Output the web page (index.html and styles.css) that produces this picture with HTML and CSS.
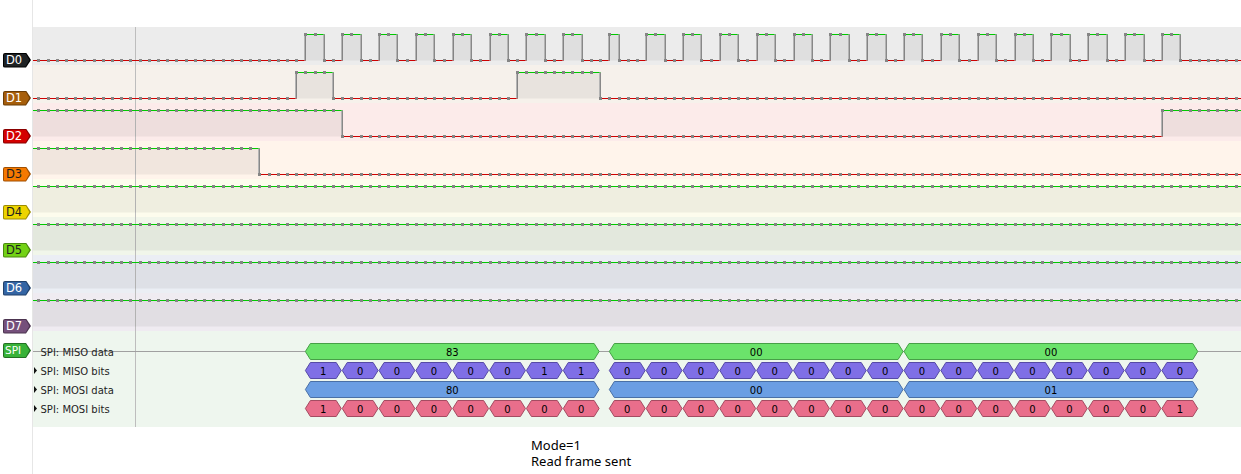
FILE: index.html
```html
<!DOCTYPE html>
<html lang="en">
<head>
    <meta charset="UTF-8">
    <meta name="viewport" content="width=device-width, initial-scale=1.0">
    <title>SPI capture</title>
    <link rel="stylesheet" href="styles.css">
</head>
<body>
    <div class="view">
        <div class="label-cell"></div>
        <div class="track-head"></div>

        <div class="label-cell"><span class="tag tag-d0"><span>D0</span></span></div>
        <div class="track band-d0" data-ch="0"></div>

        <div class="label-cell"><span class="tag tag-d1"><span>D1</span></span></div>
        <div class="track band-d1" data-ch="1"></div>

        <div class="label-cell"><span class="tag tag-d2"><span>D2</span></span></div>
        <div class="track band-d2" data-ch="2"></div>

        <div class="label-cell"><span class="tag tag-d3"><span>D3</span></span></div>
        <div class="track band-d3" data-ch="3"></div>

        <div class="label-cell"><span class="tag tag-d4"><span>D4</span></span></div>
        <div class="track band-d4" data-ch="4"></div>

        <div class="label-cell"><span class="tag tag-d5"><span>D5</span></span></div>
        <div class="track band-d5" data-ch="5"></div>

        <div class="label-cell"><span class="tag tag-d6"><span>D6</span></span></div>
        <div class="track band-d6" data-ch="6"></div>

        <div class="label-cell"><span class="tag tag-d7"><span>D7</span></span></div>
        <div class="track band-d7" data-ch="7"></div>

        <div class="label-cell"><span class="tag tag-spi"><span>SPI</span></span></div>
        <div class="track band-spi" id="spiTrack"></div>

        <div class="label-cell"></div>
        <div class="footer">
            <div>Mode=1</div>
            <div>Read frame sent</div>
        </div>
    </div>

    <script src="script.js"></script>
</body>
</html>
```

FILE: styles.css
```css
body {
    margin: 0;
    background-color: #fff;
    font-family: "DejaVu Sans", sans-serif;
}
.view {
    display: grid;
    grid-template-columns: 33px 1208px;
    grid-template-rows: 27px repeat(8, 38px) 96px 47px;
    width: 1241px;
    height: 474px;
    overflow: hidden;
}
.label-cell {
    border-right: 1px solid #e6e6e6;
}
.track svg {
    display: block;
}
.band-d0 { background-color: #ececec; }
.band-d1 { background-color: #f6f1eb; }
.band-d2 { background-color: #fcebea; }
.band-d3 { background-color: #fff4eb; }
.band-d4 { background-color: #fdfced; }
.band-d5 { background-color: #f1f6ea; }
.band-d6 { background-color: #ebeef4; }
.band-d7 { background-color: #efebf1; }
.band-spi { background-color: #eef6ee; }

.tag {
    display: block;
    width: 28px;
    height: 15px;
    margin: 25.5px 0 0 3px;
    padding: 1px;
    box-sizing: border-box;
    border-radius: 2px 0 0 2px;
    clip-path: polygon(0 0, 23px 0, 28px 7.5px, 23px 15px, 0 15px);
}
.tag span {
    display: block;
    height: 13px;
    padding-left: 2px;
    border-radius: 1px 0 0 1px;
    clip-path: polygon(0 0, 21.6px 0, 25.3px 6.5px, 21.6px 13px, 0 13px);
    font-size: 11.5px;
    line-height: 13px;
    color: #fff;
}
.tag-d0 { background-color: #000; }
.tag-d0 span { background-color: #1e2224; }
.tag-d1 { background-color: #6b3c05; }
.tag-d1 span { background-color: #a65e0b; }
.tag-d2 { background-color: #8a0000; }
.tag-d2 span { background-color: #d40000; }
.tag-d3 { background-color: #a04f00; }
.tag-d3 span { background-color: #f57900; color: #1e1e1e; }
.tag-d4 { background-color: #9c8c00; }
.tag-d4 span { background-color: #edd400; color: #1e1e1e; }
.tag-d5 { background-color: #4a890e; }
.tag-d5 span { background-color: #73d216; color: #1e1e1e; }
.tag-d6 { background-color: #21416a; }
.tag-d6 span { background-color: #3465a4; }
.tag-d7 { background-color: #4c3450; }
.tag-d7 span { background-color: #75507b; }
.tag-spi {
    margin-top: 12px;
    background-color: #237023;
}
.tag-spi span {
    background-color: #38b238;
    padding-left: 1px;
    font-size: 10.5px;
}

.dec-title {
    font-family: "DejaVu Sans", sans-serif;
    font-size: 10px;
    fill: #1e1e1e;
}
.ann-text {
    font-family: "DejaVu Sans", sans-serif;
    font-size: 10px;
    text-anchor: middle;
    fill: #000;
}
.footer {
    padding: 10px 0 0 498px;
    font-family: "Noto Sans", sans-serif;
    font-size: 13px;
    line-height: 16px;
    color: #000;
}
```

FILE: script.js
```javascript
const NS = 'http://www.w3.org/2000/svg';
const PITCH = 9.21;
const ORIGIN = 5.3;
const HIGH_Y = 7.5;
const LOW_Y = 33.5;
const CURSOR_X = 102.5;

function el(tag, attrs, parent) {
    const node = document.createElementNS(NS, tag);
    for (const key in attrs) node.setAttribute(key, attrs[key]);
    parent.appendChild(node);
    return node;
}

function sampleX(i) {
    return Math.round(ORIGIN + PITCH * i) + 0.5;
}

// SCK: 3 bytes, 8 pulses each
function clockEdges() {
    const edges = [];
    for (let k = 0; k < 8; k++) edges.push(29 + 4 * k, 31 + 4 * k);
    edges.push(62, 63);
    for (let k = 1; k < 8; k++) edges.push(62 + 4 * k, 64 + 4 * k);
    for (let k = 0; k < 8; k++) edges.push(94 + 4 * k, 96 + 4 * k);
    return edges;
}

const channels = [
    { init: 0, edges: clockEdges() },
    { init: 0, edges: [28, 32, 52, 61] },
    { init: 1, edges: [33, 122] },
    { init: 1, edges: [24] },
    { init: 1, edges: [] },
    { init: 1, edges: [] },
    { init: 1, edges: [] },
    { init: 1, edges: [] }
];

function drawChannel(track, ch) {
    const w = track.clientWidth;
    const h = track.clientHeight;
    const svg = el('svg', { width: w, height: h }, track);
    el('line', { x1: CURSOR_X, y1: 0, x2: CURSOR_X, y2: h, stroke: '#bdbdbd' }, svg);

    let level = ch.init;
    let from = 0;
    const stops = ch.edges.map(sampleX).concat([w]);
    stops.forEach((x, n) => {
        const y = level ? HIGH_Y : LOW_Y;
        if (level) {
            el('rect', { x: from, y: HIGH_Y, width: x - from, height: LOW_Y - HIGH_Y, fill: 'rgba(0,0,0,0.055)' }, svg);
        }
        el('line', { x1: from, y1: y, x2: x, y2: y, stroke: level ? '#00c800' : '#cc0000' }, svg);
        if (n < ch.edges.length) {
            el('line', { x1: x - 1, y1: HIGH_Y, x2: x - 1, y2: LOW_Y, stroke: '#b4b4b4' }, svg);
            el('line', { x1: x, y1: HIGH_Y, x2: x, y2: LOW_Y, stroke: '#888' }, svg);
        }
        level = 1 - level;
        from = x;
    });

    for (let i = 0; sampleX(i) < w + 2; i++) {
        const flips = ch.edges.filter(e => e <= i).length;
        const high = (ch.init + flips) % 2 === 1;
        el('rect', {
            x: sampleX(i) - 1.5,
            y: (high ? HIGH_Y : LOW_Y) - 1.5,
            width: 3, height: 3, fill: '#858585'
        }, svg);
    }
}

function bytes(list) {
    return list.map(([s, hex]) => ({ from: s, to: s + 32, text: hex }));
}

function bits(list) {
    return list.flatMap(([s, hex]) => {
        const v = parseInt(hex, 16);
        return Array.from({ length: 8 }, (_, k) => ({
            from: s + 4 * k,
            to: s + 4 * k + 4,
            text: String((v >> (7 - k)) & 1)
        }));
    });
}

const miso = [[29, '83'], [62, '00'], [94, '00']];
const mosi = [[29, '80'], [62, '00'], [94, '01']];

const decoderRows = [
    { title: 'SPI: MISO data', fill: '#6be36b', stroke: '#47a047', baseline: true, items: bytes(miso) },
    { title: 'SPI: MISO bits', fill: '#7f6fe6', stroke: '#564aa6', expander: true, items: bits(miso) },
    { title: 'SPI: MOSI data', fill: '#6b9ee3', stroke: '#4a70a6', expander: true, items: bytes(mosi) },
    { title: 'SPI: MOSI bits', fill: '#e96e8b', stroke: '#a44c62', expander: true, items: bits(mosi) }
];

function drawDecoder(track) {
    const w = track.clientWidth;
    const h = track.clientHeight;
    const svg = el('svg', { width: w, height: h }, track);
    el('line', { x1: CURSOR_X, y1: 0, x2: CURSOR_X, y2: h, stroke: '#bdbdbd' }, svg);

    decoderRows.forEach((row, r) => {
        const c = 20.5 + 19 * r;
        if (row.baseline) {
            el('line', { x1: 0, y1: c, x2: w, y2: c, stroke: '#a0a0a0' }, svg);
        }
        if (row.expander) {
            el('polygon', { points: `1,${c - 3.5} 4,${c} 1,${c + 3.5}`, fill: '#111' }, svg);
        }
        const title = el('text', { x: 7.5, y: c + 4, class: 'dec-title' }, svg);
        title.textContent = row.title;

        row.items.forEach(item => {
            const xs = ORIGIN + PITCH * item.from;
            const xe = ORIGIN + PITCH * item.to - 1;
            const pts = [
                [xs, c], [xs + 5, c - 8], [xe - 5, c - 8],
                [xe, c], [xe - 5, c + 8], [xs + 5, c + 8]
            ].map(p => p.join(',')).join(' ');
            el('polygon', { points: pts, fill: row.fill, stroke: row.stroke }, svg);
            const label = el('text', { x: (xs + xe) / 2, y: c + 4, class: 'ann-text' }, svg);
            label.textContent = item.text;
        });
    });
}

document.querySelectorAll('.track[data-ch]').forEach(track => {
    drawChannel(track, channels[Number(track.dataset.ch)]);
});
drawDecoder(document.getElementById('spiTrack'));
```
